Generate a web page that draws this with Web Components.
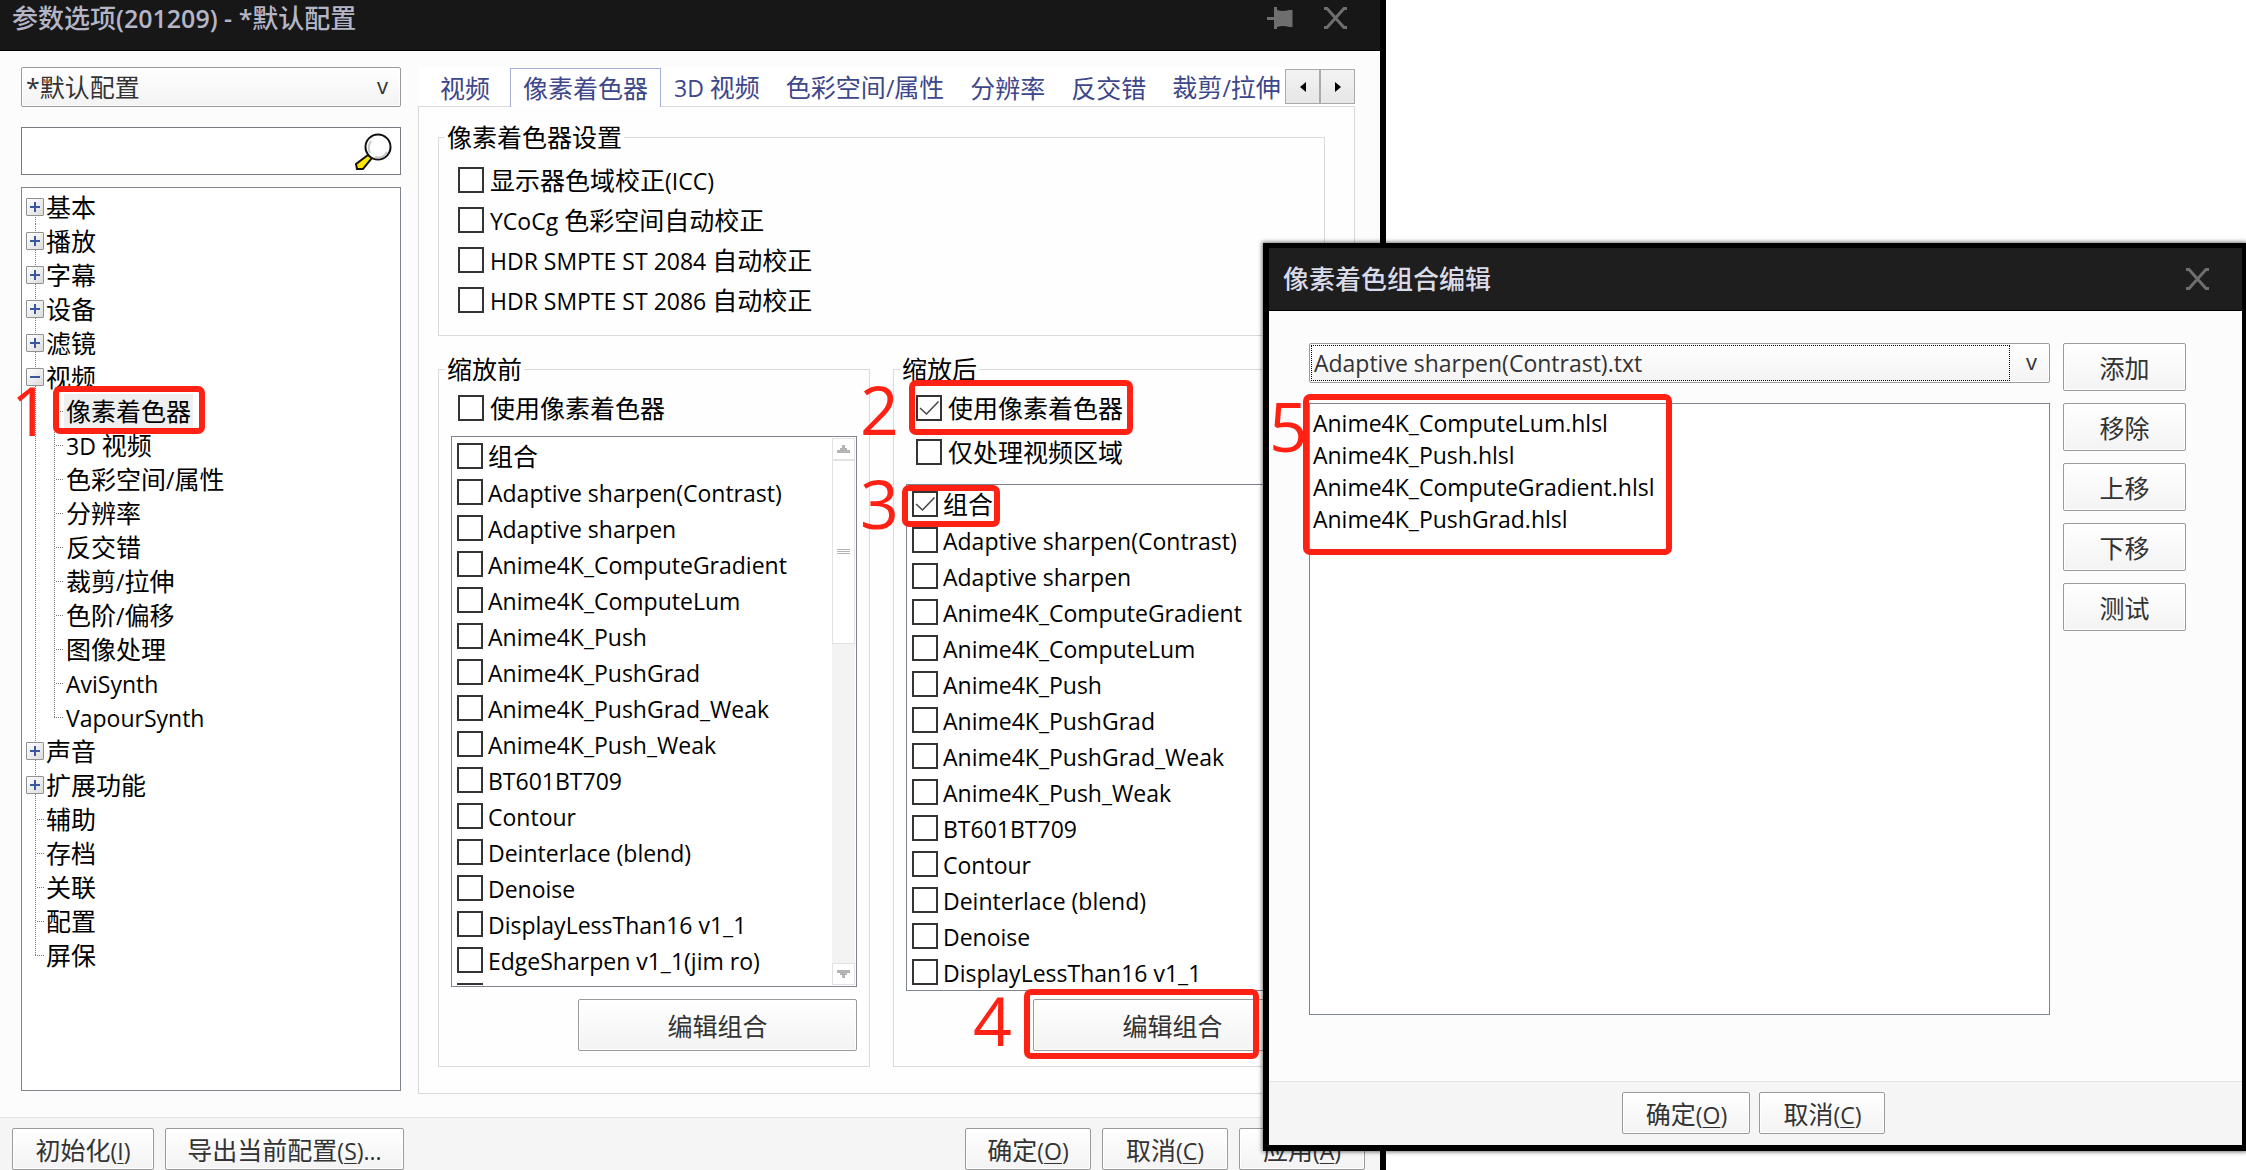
<!DOCTYPE html>
<html lang="zh-CN">
<head>
<meta charset="utf-8">
<title>参数选项</title>
<style>
    body{
        margin: 0;
        background: #fff;
        color: #000;
        font-family: "Open Sans", "Noto Sans CJK SC", sans-serif;
        font-size: 25px;
        line-height: 34px;
    }

    main{
        position: relative;
        min-height: 100vh;
    }

    .options{
        width: 61.71%;
        height: 100vh;
    }

    .editor{
        position: absolute;
        left: 56.23%;
        right: 0;
        top: 243px;
    }

    .columns{
        flex: 1;
        display: grid;
        grid-template-columns: 380px 1fr;
        column-gap: 17px;
        padding: 16px 25px 23px 21px;
        min-height: 0;
    }

    .sidebar{
        display: flex;
        flex-direction: column;
        padding-bottom: 3px;
    }

    .sidebar search-box{ margin: 20px 0 12px; }
    .sidebar option-tree{ flex: 1; }

    .pair{
        flex: 1;
        display: grid;
        grid-template-columns: 1fr 1fr;
        column-gap: 23px;
        min-height: 0;
    }

    .indent{ padding: 6px 7px 0; }
    .before{ padding-left: 7px; }
    .after{ padding-left: 10px; }
    .before check-row, .after check-row{ --row: 44px; }

    .wide{
        width: 279px;
        align-self: flex-end;
        --h: 52px;
    }

    .edit{
        display: grid;
        grid-template-columns: 1fr 123px;
        column-gap: 13px;
        padding: 32px 56px 66px 40px;
    }

    .edit .left{
        position: relative;
        display: flex;
        flex-direction: column;
        gap: 20px;
    }

    .edit .right{
        display: flex;
        flex-direction: column;
        gap: 12px;
        --h: 48px;
    }
</style>
</head>
<body>
<main>
    <app-window class="options" label="参数选项(201209) - *默认配置" pin>
        <div class="columns">
            <div class="sidebar">
                <drop-down label="*默认配置" name="配置"></drop-down>
                <search-box></search-box>
                <option-tree>
                    <step-mark num="1" style="left: 31px; top: 198px; --w: 152px; --hh: 48px; --nx: -42px"></step-mark>
                </option-tree>
            </div>
            <tab-panel>
                <group-box label="像素着色器设置">
                    <div class="indent">
                        <check-row label="显示器色域校正(ICC)"></check-row>
                        <check-row label="YCoCg 色彩空间自动校正"></check-row>
                        <check-row label="HDR SMPTE ST 2084 自动校正"></check-row>
                        <check-row label="HDR SMPTE ST 2086 自动校正"></check-row>
                    </div>
                </group-box>
                <div class="pair">
                    <group-box label="缩放前">
                        <div class="before">
                            <check-row label="使用像素着色器"></check-row>
                        </div>
                        <shader-list style="margin: 6px 0 12px"></shader-list>
                        <push-button class="wide" label="编辑组合"></push-button>
                    </group-box>
                    <group-box label="缩放后">
                        <div class="after">
                            <check-row label="使用像素着色器" checked></check-row>
                            <check-row label="仅处理视频区域"></check-row>
                        </div>
                        <shader-list style="margin: 10px 0 8px" combined></shader-list>
                        <push-button class="wide" label="编辑组合"></push-button>
                        <step-mark num="2" style="left: 16px; top: 28px; --w: 224px; --hh: 55px; --nx: -49px; --ny: 5px"></step-mark>
                        <step-mark num="3" style="left: 9px; top: 133px; --w: 98px; --hh: 42px; --nx: -42px; --ny: -6px"></step-mark>
                        <step-mark num="4" style="left: 131px; top: 637px; --w: 235px; --hh: 70px; --nx: -51px; --ny: 7px"></step-mark>
                    </group-box>
                </div>
            </tab-panel>
        </div>
        <push-button slot="footer" style="width: 142px" label="初始化(&amp;I)"></push-button>
        <push-button slot="footer" style="width: 239px; margin-right: auto" label="导出当前配置(&amp;S)..."></push-button>
        <push-button slot="footer" style="width: 126px" label="确定(&amp;O)"></push-button>
        <push-button slot="footer" style="width: 126px" label="取消(&amp;C)"></push-button>
        <push-button slot="footer" style="width: 126px" label="应用(&amp;A)"></push-button>
    </app-window>

    <app-window class="editor" label="像素着色组合编辑" dialog>
        <div class="edit">
            <div class="left">
                <drop-down label="Adaptive sharpen(Contrast).txt" name="组合" focused></drop-down>
                <file-list></file-list>
                <step-mark num="5" style="left: -6px; top: 51px; --w: 369px; --hh: 161px; --nx: -34px; --ny: 8px"></step-mark>
            </div>
            <div class="right">
                <push-button label="添加"></push-button>
                <push-button label="移除"></push-button>
                <push-button label="上移"></push-button>
                <push-button label="下移"></push-button>
                <push-button label="测试"></push-button>
            </div>
        </div>
        <push-button slot="footer" style="width: 128px" label="确定(&amp;O)"></push-button>
        <push-button slot="footer" style="width: 126px" label="取消(&amp;C)"></push-button>
    </app-window>
</main>

<script>
// latin runs are set a little smaller than the chinese text around them
const base = `
    *{ box-sizing: border-box; }
    .en{ font-size: 23px; white-space: pre; }
    button, input, select{ font: inherit; color: inherit; }
    u{ text-underline-offset: 3px; text-decoration-thickness: 1px; }
`;

const mix = function(text){
    return text
        .replace(/[ -~]+/g, (run) => `<span class="en">${run}</span>`)
        .replace(/&(\w)/g, '<u>$1</u>');
}

class Part extends HTMLElement {
    connectedCallback(){
        if (this.shadowRoot) return;
        const shadow = this.attachShadow({ mode: 'open' });
        shadow.innerHTML = `<style>${base}${this.css()}</style>${this.html()}`;
    }
    get label(){
        return this.getAttribute('label') || '';
    }
}

class AppWindow extends Part {
    css(){
        return `
            :host{
                display: flex;
                flex-direction: column;
                box-sizing: border-box;
                background: #fcfcfc;
                border: 0 solid #000;
                border-right-width: 6px;
                --bar: #171717;
                --ink: #b4b5c6;
            }
            :host([dialog]){
                border-width: 5px 4px 6px 6px;
                box-shadow: 0 0 4px 1px rgba(0,0,0,.55);
                --bar: #1e1e1e;
                --ink: #d9dbe8;
            }
            header{
                display: flex;
                align-items: center;
                gap: 31px;
                height: 51px;
                padding: 0 33px 14px 12px;
                background: var(--bar);
                border-bottom: 1px solid #000;
                color: var(--ink);
            }
            :host([dialog]) header{
                height: 63px;
                padding: 0 33px 0 14px;
            }
            h1{
                flex: 1;
                margin: 0;
                font-size: 26px;
                font-weight: 500;
                line-height: 36px;
            }
            h1 .en{ font-size: 25px; font-weight: 600; }
            header button{
                display: flex;
                padding: 0;
                border: 0;
                background: none;
            }
            footer{
                display: flex;
                gap: 11px;
                height: 53px;
                padding: 10px 15px 0 12px;
                background: #f5f5f5;
                border-top: 1px solid #e2e2e2;
            }
            :host([dialog]) footer{
                height: 64px;
                justify-content: center;
                gap: 9px;
            }
        `;
    }
    html(){
        const pin = `<button aria-label="固定"><svg width="26" height="22" viewBox="0 0 26 22" fill="#6e6e6e">
            <path d="M0 10h7V0h3v3q6 2 12 0h3.500v17H22q-6-2-12 0v2H7V13H0z"/></svg></button>`;
        return `
            <header>
                <h1>${mix(this.label)}</h1>
                ${this.hasAttribute('pin') ? pin : ''}
                <button aria-label="关闭"><svg width="23" height="22" viewBox="0 0 23 22" fill="none" stroke="#6e6e6e" stroke-width="3">
                    <path d="M0 1.500h3L20 20.500h3M23 1.500h-3L3 20.500H0"/></svg></button>
            </header>
            <slot></slot>
            <footer><slot name="footer"></slot></footer>
        `;
    }
}

class PushButton extends Part {
    css(){
        return `
            :host{ display: block; }
            button{
                display: block;
                width: 100%;
                height: var(--h, 42px);
                padding: 2px 0 0;
                border: 1px solid #9a9a9a;
                border-radius: 2px;
                background: linear-gradient(#fff, #f3f3f3);
                box-shadow: inset 0 0 0 1px #fff;
                color: #333;
                white-space: nowrap;
            }
        `;
    }
    html(){
        return `<button>${mix(this.label)}</button>`;
    }
}

class DropDown extends Part {
    css(){
        return `
            :host{
                display: grid;
                color: #333;
            }
            :host([focused]){ font-size: 23px; }
            select, span, i{ grid-area: 1 / 1; }
            select{
                appearance: none;
                height: 40px;
                width: 100%;
                padding: 0 40px 0 4px;
                border: 1px solid #9a9a9a;
                border-radius: 2px;
                background: linear-gradient(#fff, #f3f3f3);
                box-shadow: inset 0 0 0 1px #fff;
            }
            i{
                margin: 2px 40px 2px 2px;
                border: 1px dotted #000;
                pointer-events: none;
            }
            span{
                justify-self: end;
                align-self: center;
                padding: 0 13px 4px 0;
                font-size: 22px;
                pointer-events: none;
            }
        `;
    }
    html(){
        return `
            <select aria-label="${this.getAttribute('name')}"><option>${this.label}</option></select>
            ${this.hasAttribute('focused') ? '<i></i>' : ''}
            <span>v</span>
        `;
    }
}

class SearchBox extends Part {
    css(){
        return `
            :host{
                display: flex;
                align-items: center;
                box-sizing: border-box;
                height: 48px;
                padding-right: 8px;
                border: 1px solid #7a7a82;
                background: #fff;
            }
            input{
                flex: 1;
                min-width: 0;
                padding: 0 6px;
                border: 0;
                outline: none;
                background: none;
            }
        `;
    }
    html(){
        return `
            <input type="text" aria-label="搜索">
            <svg width="37" height="37" viewBox="0 0 37 37" stroke="#111" stroke-width="2">
                <path d="M13 22l4 3-9 11H2l-1-5z" fill="#ffe600"/>
                <circle cx="23" cy="14" r="12.500" fill="#fff"/>
                <path d="M15 20q-3-6 1-12M20 24q8 2 12-5" fill="none" stroke="#c8c8c8"/>
            </svg>
        `;
    }
}

const tree = [
    ['基本'], ['播放'], ['字幕'], ['设备'], ['滤镜'],
    ['视频', ['像素着色器', '3D 视频', '色彩空间/属性', '分辨率', '反交错', '裁剪/拉伸',
        '色阶/偏移', '图像处理', 'AviSynth', 'VapourSynth']],
    ['声音'], ['扩展功能'],
    ['辅助', null], ['存档', null], ['关联', null], ['配置', null], ['屏保', null],
];

class OptionTree extends Part {
    css(){
        return `
            :host{
                display: block;
                position: relative;
                box-sizing: border-box;
                padding: 2px 4px;
                border: 1px solid #7f8590;
                background: #fff;
            }
            ul{
                margin: 0;
                padding: 0;
                list-style: none;
            }
            .row{
                display: flex;
                align-items: center;
                height: 34px;
            }
            .stem{
                display: flex;
                align-items: center;
                width: 18px;
                height: 34px;
                --v: repeating-linear-gradient(#777 0 1px, #fff 1px 2px);
                --hz: repeating-linear-gradient(90deg, #777 0 1px, #fff 1px 2px);
                background: var(--v) 9px 0 / 1px 100% no-repeat;
            }
            .stem.leaf{ background: var(--v) 9px 0 / 1px 100% no-repeat, var(--hz) 9px 17px / 9px 1px no-repeat; }
            .stem.child{
                width: 20px;
                background: var(--v) 10px 0 / 1px 100% no-repeat, var(--hz) 10px 17px / 9px 1px no-repeat;
            }
            .stem.end{ background-size: 1px 50%, 9px 1px; }
            .stem.first{ background: var(--v) 9px 17px / 1px 17px no-repeat; }
            .stem button{
                display: flex;
                padding: 3px;
                border: 1px solid #919191;
                border-radius: 1px;
                background: linear-gradient(135deg, #fff, #dcdcdc);
            }
            .name{ padding: 0 2px; white-space: nowrap; }
            .on{ background: #efefef; }
        `;
    }
    row(name, kids, i, all){
        const leaf = kids === null;
        let kind = leaf ? 'leaf' : '';
        if (i == 0) kind = 'first';
        if (i == all.length - 1) kind += ' end';
        const sign = kids ? 'M0 5h10' : 'M0 5h10M5 0v10';
        const toggle = leaf ? '' : `<button aria-label="${kids ? '折叠' : '展开'}${name}"><svg width="10" height="10" stroke="#3a569c" stroke-width="2"><path d="${sign}"/></svg></button>`;
        const children = (kids || []).map((k, n) => `
            <li class="row"><div class="stem"></div><div class="stem child ${n == kids.length - 1 ? 'end' : ''}"></div><span class="name ${n == 0 ? 'on' : ''}">${mix(k)}</span></li>`).join('');
        return `<li>
            <div class="row"><div class="stem ${kind}">${toggle}</div><span class="name">${mix(name)}</span></div>
            ${children ? `<ul>${children}</ul>` : ''}
        </li>`;
    }
    html(){
        return `<ul>${tree.map(([name, kids], i) => this.row(name, kids, i, tree)).join('')}</ul><slot></slot>`;
    }
}

class TabPanel extends Part {
    css(){
        return `
            :host{
                display: flex;
                flex-direction: column;
                min-width: 0;
                min-height: 0;
            }
            .strip{
                display: flex;
                align-items: flex-start;
                height: 40px;
                background: #fff;
            }
            nav{
                flex: 1;
                display: flex;
                height: 40px;
                padding: 1px 0 0 2px;
                overflow: hidden;
            }
            .tab{
                flex: none;
                height: 39px;
                padding: 0 13px;
                border: 0;
                background: none;
                color: #3d478a;
                position: relative;
            }
            .tab:first-child{ width: 90px; }
            .tab[aria-selected=true]{
                padding: 0 12px;
                border: 1px solid #a5b0d6;
                border-bottom: 0;
                background: #fff;
            }
            .spin{
                display: flex;
                padding-top: 2px;
            }
            .spin button{
                display: flex;
                align-items: center;
                justify-content: center;
                width: 35px;
                height: 35px;
                padding: 0;
                border: 1px solid #aaa;
                background: linear-gradient(#f3f3f3, #e6e6e6);
            }
            section{
                flex: 1;
                display: flex;
                flex-direction: column;
                gap: 16px;
                min-height: 0;
                margin-top: -1px;
                padding: 13px 29px 26px 19px;
                border: 1px solid #d9d9d9;
                background: #fefefe;
            }
            nav{ z-index: 1; }
        `;
    }
    html(){
        const tabs = ['视频', '像素着色器', '3D 视频', '色彩空间/属性', '分辨率', '反交错', '裁剪/拉伸'];
        return `
            <div class="strip">
                <nav role="tablist">${tabs.map((t, i) => `<button class="tab" role="tab" aria-selected="${i == 1}">${mix(t)}</button>`).join('')}</nav>
                <div class="spin">
                    <button aria-label="向左"><svg width="6" height="10"><path d="M6 0v10L0 5z"/></svg></button>
                    <button aria-label="向右"><svg width="6" height="10"><path d="M0 0v10l6-5z"/></svg></button>
                </div>
            </div>
            <section><slot></slot></section>
        `;
    }
}

class GroupBox extends Part {
    css(){
        return `
            :host{
                display: flex;
                position: relative;
                min-width: 0;
                min-height: 0;
            }
            fieldset{
                flex: 1;
                display: flex;
                flex-direction: column;
                min-width: 0;
                min-height: 0;
                margin: 0;
                padding: 0 12px 15px;
                border: 1px solid #dadada;
            }
            legend{
                margin-left: -6px;
                padding: 0 2px;
            }
        `;
    }
    html(){
        return `<fieldset><legend>${mix(this.label)}</legend><slot></slot></fieldset>`;
    }
}

class CheckRow extends Part {
    css(){
        return `
            :host{ display: block; }
            label{
                display: flex;
                align-items: center;
                gap: var(--gap, 6px);
                height: var(--row, 40px);
                white-space: nowrap;
            }
            .box{
                display: grid;
                width: 26px;
                height: 26px;
            }
            input, svg{ grid-area: 1 / 1; }
            input{
                appearance: none;
                width: 26px;
                height: 26px;
                margin: 0;
                border: 2px solid #333;
                background: #fff;
            }
            svg{ visibility: hidden; pointer-events: none; z-index: 1; }
            input:checked + svg{ visibility: visible; }
        `;
    }
    html(){
        const name = this.label ? '' : 'aria-label="更多"';
        return `<label>
            <span class="box">
                <input type="checkbox" ${name} ${this.hasAttribute('checked') ? 'checked' : ''}>
                <svg width="26" height="26" fill="none" stroke="#444" stroke-width="1.500"><path d="M4 13l6.500 6L22.500 6.500"/></svg>
            </span>
            <span>${mix(this.label)}</span>
        </label>`;
    }
}

const shaders = [
    '组合', 'Adaptive sharpen(Contrast)', 'Adaptive sharpen', 'Anime4K_ComputeGradient',
    'Anime4K_ComputeLum', 'Anime4K_Push', 'Anime4K_PushGrad', 'Anime4K_PushGrad_Weak',
    'Anime4K_Push_Weak', 'BT601BT709', 'Contour', 'Deinterlace (blend)', 'Denoise',
    'DisplayLessThan16 v1_1', 'EdgeSharpen v1_1(jim ro)', '',
];

class ShaderList extends Part {
    css(){
        return `
            :host{
                flex: 1 1 0;
                display: flex;
                min-height: 0;
                padding: 1px;
                border: 1px solid #7f8590;
                background: #fff;
            }
            .rows{
                flex: 1;
                overflow: hidden;
                padding-left: 4px;
                --row: 36px;
                --gap: 5px;
            }
            .bar{
                display: flex;
                flex-direction: column;
                width: 23px;
                background: #f3f3f3;
            }
            .bar button, .thumb{
                display: flex;
                align-items: center;
                justify-content: center;
                flex: none;
                height: 22px;
                padding: 0;
                border: 1px solid #e2e2e2;
                background: #fff;
            }
            .bar .thumb{
                height: 184px;
                margin-bottom: auto;
            }
        `;
    }
    html(){
        const on = this.hasAttribute('combined');
        const list = on ? shaders.slice(0, 14) : shaders;
        return `
            <div class="rows">${list.map((s, i) => `<check-row label="${s}" ${on && i == 0 ? 'checked' : ''}></check-row>`).join('')}</div>
            <div class="bar">
                <button aria-label="向上"><svg width="13" height="8" fill="#b4b4b4"><path d="M5 0h3v3h2v2h3v3H0V5h3V3h2z"/></svg></button>
                <div class="thumb"><svg width="13" height="6" fill="#b4b4b4"><path d="M0 0h13v1H0zM0 2h13v1H0zM0 4h13v1H0z"/></svg></div>
                <button aria-label="向下"><svg width="13" height="8" fill="#b4b4b4"><path d="M5 8h3V5h2V3h3V0H0v3h3v2h2z"/></svg></button>
            </div>
        `;
    }
}

class FileList extends Part {
    css(){
        return `
            :host{
                display: block;
                box-sizing: border-box;
                height: 612px;
                padding: 3px;
                border: 1px solid #7f8590;
                background: #fff;
                font-size: 23px;
                line-height: 32px;
            }
            ul{
                margin: 0;
                padding: 0;
                list-style: none;
            }
        `;
    }
    html(){
        const files = ['Anime4K_ComputeLum.hlsl', 'Anime4K_Push.hlsl', 'Anime4K_ComputeGradient.hlsl', 'Anime4K_PushGrad.hlsl'];
        return `<ul>${files.map((f) => `<li>${f}</li>`).join('')}</ul>`;
    }
}

// red frame with its step number on the left
class StepMark extends Part {
    css(){
        return `
            :host{
                position: absolute;
                width: var(--w);
                height: var(--hh);
                pointer-events: none;
                z-index: 2;
            }
            .frame{
                height: 100%;
                border: 6px solid #ff2113;
                border-radius: 7px;
            }
            b{
                position: absolute;
                left: var(--nx);
                top: var(--ny, 0);
                color: #ff2113;
                font-size: 68px;
                font-weight: 400;
                line-height: 48px;
            }
        `;
    }
    html(){
        return `<div class="frame"></div><b>${this.getAttribute('num')}</b>`;
    }
}

customElements.define('step-mark', StepMark)
customElements.define('check-row', CheckRow)
customElements.define('push-button', PushButton)
customElements.define('drop-down', DropDown)
customElements.define('search-box', SearchBox)
customElements.define('option-tree', OptionTree)
customElements.define('shader-list', ShaderList)
customElements.define('file-list', FileList)
customElements.define('group-box', GroupBox)
customElements.define('tab-panel', TabPanel)
customElements.define('app-window', AppWindow)
</script>
</body>
</html>
